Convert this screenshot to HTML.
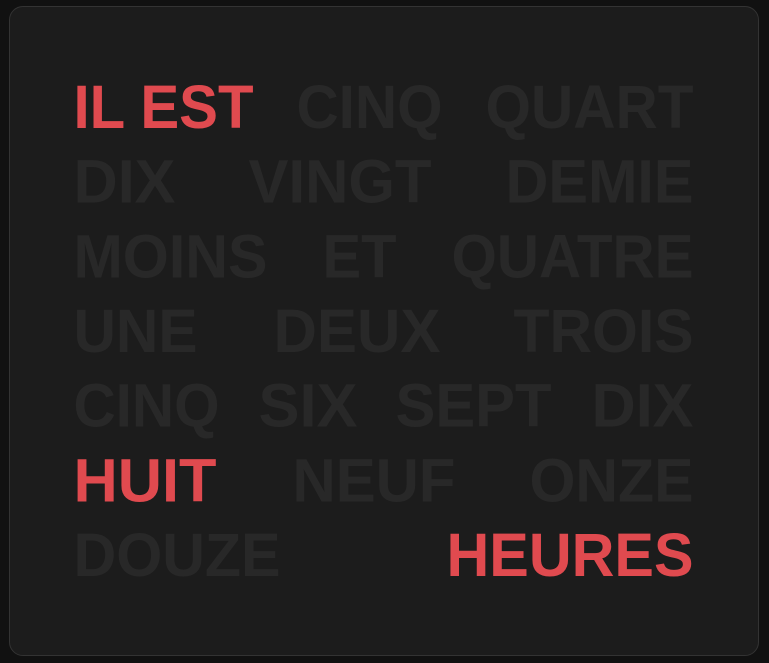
<!DOCTYPE html>
<html><head><meta charset="utf-8"><style>
html,body{margin:0;padding:0;background:#111111;width:769px;height:663px;overflow:hidden}
.card{position:absolute;left:9px;top:6px;width:750px;height:650px;border:1px solid #333;border-radius:14px;background:#1c1c1c;box-sizing:border-box}
svg{position:absolute;left:0;top:0}
text{font-family:"Liberation Sans",sans-serif;font-weight:bold;font-size:61px;fill:#282828}
.r{fill:#e04a4f}
</style></head><body>
<div class="card"></div>
<svg width="769" height="663">
<g transform="translate(-1.5,0)">
<text class="r" x="75" y="128" textLength="180" lengthAdjust="spacingAndGlyphs">IL EST</text>
<text x="298" y="128" textLength="146" lengthAdjust="spacingAndGlyphs">CINQ</text>
<text x="487" y="128" textLength="208" lengthAdjust="spacingAndGlyphs">QUART</text>

<text x="75" y="202.7" textLength="102" lengthAdjust="spacingAndGlyphs">DIX</text>
<text x="250" y="202.7" textLength="183" lengthAdjust="spacingAndGlyphs">VINGT</text>
<text x="507" y="202.7" textLength="188" lengthAdjust="spacingAndGlyphs">DEMIE</text>

<text x="75" y="277.3" textLength="194" lengthAdjust="spacingAndGlyphs">MOINS</text>
<text x="324" y="277.3" textLength="74" lengthAdjust="spacingAndGlyphs">ET</text>
<text x="453" y="277.3" textLength="242" lengthAdjust="spacingAndGlyphs">QUATRE</text>

<text x="75" y="352" textLength="124" lengthAdjust="spacingAndGlyphs">UNE</text>
<text x="275" y="352" textLength="167" lengthAdjust="spacingAndGlyphs">DEUX</text>
<text x="515" y="352" textLength="180" lengthAdjust="spacingAndGlyphs">TROIS</text>

<text x="75" y="426.7" textLength="146" lengthAdjust="spacingAndGlyphs">CINQ</text>
<text x="260" y="426.7" textLength="99" lengthAdjust="spacingAndGlyphs">SIX</text>
<text x="397" y="426.7" textLength="156" lengthAdjust="spacingAndGlyphs">SEPT</text>
<text x="593" y="426.7" textLength="102" lengthAdjust="spacingAndGlyphs">DIX</text>

<text class="r" x="75" y="501.3" textLength="143" lengthAdjust="spacingAndGlyphs">HUIT</text>
<text x="294" y="501.3" textLength="163" lengthAdjust="spacingAndGlyphs">NEUF</text>
<text x="531" y="501.3" textLength="164" lengthAdjust="spacingAndGlyphs">ONZE</text>

<text x="75" y="576" textLength="207" lengthAdjust="spacingAndGlyphs">DOUZE</text>
<text class="r" x="448" y="576" textLength="247" lengthAdjust="spacingAndGlyphs">HEURES</text>
</g>
</svg>
</body></html>
